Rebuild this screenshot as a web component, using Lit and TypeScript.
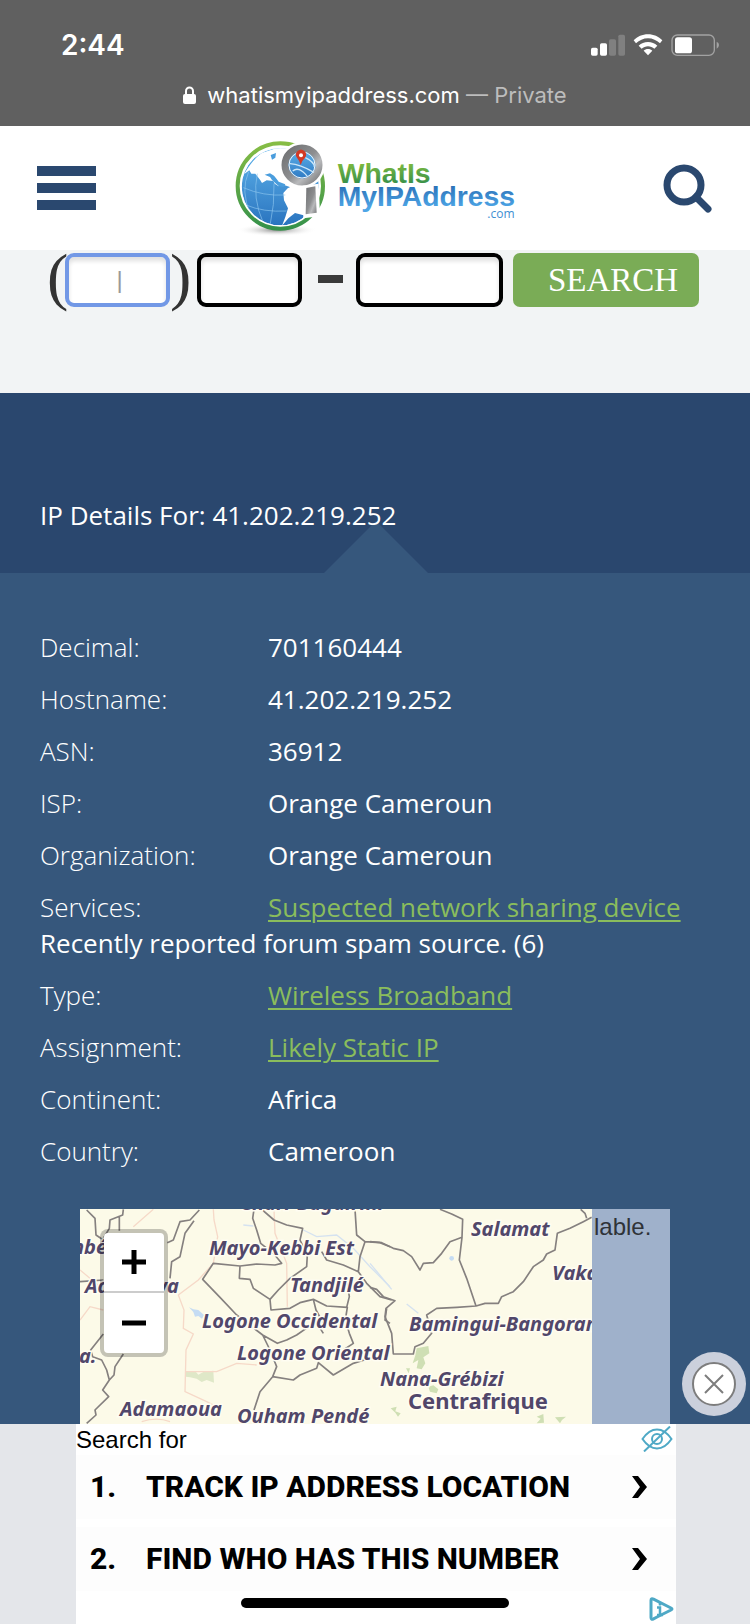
import { LitElement, html, css, nothing } from "lit";
import { customElement } from "lit/decorators.js";

interface Detail {
  label: string;
  value: string;
  link?: boolean;
  note?: string;
}

const DETAILS: Detail[] = [
  { label: "Decimal:", value: "701160444" },
  { label: "Hostname:", value: "41.202.219.252" },
  { label: "ASN:", value: "36912" },
  { label: "ISP:", value: "Orange Cameroun" },
  { label: "Organization:", value: "Orange Cameroun" },
  {
    label: "Services:",
    value: "Suspected network sharing device",
    link: true,
    note: "Recently reported forum spam source. (6)",
  },
  { label: "Type:", value: "Wireless Broadband", link: true },
  { label: "Assignment:", value: "Likely Static IP", link: true },
  { label: "Continent:", value: "Africa" },
  { label: "Country:", value: "Cameroon" },
];

const ADS = ["TRACK IP ADDRESS LOCATION", "FIND WHO HAS THIS NUMBER"];

@customElement("browser-bar")
export class BrowserBar extends LitElement {
  static styles = css`
    :host {
      display: flex;
      flex-direction: column;
      height: 126px;
      background: #606060;
      color: #fff;
      font-family: Inter, sans-serif;
    }
    .status {
      display: flex;
      justify-content: space-between;
      align-items: center;
      padding: 27px 31px 0 61px;
      height: 36px;
    }
    .time {
      font-size: 28px;
      font-weight: 600;
      line-height: 36px;
    }
    .signals {
      display: block;
      width: 128px;
      height: 22px;
    }
    .address {
      display: flex;
      justify-content: center;
      align-items: center;
      gap: 11px;
      margin-top: 16px;
      font-size: 22px;
      line-height: 32px;
    }
    .private {
      color: #bdbdbd;
    }
    .lock {
      display: block;
      width: 13px;
      height: 18px;
    }
  `;

  render() {
    return html`
      <div class="status">
        <span class="time">2:44</span>
        <svg class="signals" viewBox="93 41 384 66" aria-hidden="true">
          <g fill="#fff">
            <rect x="93" y="82" width="20" height="24" rx="5" />
            <rect x="120" y="69" width="21" height="37" rx="5" />
          </g>
          <g fill="#808080">
            <rect x="147" y="57" width="21" height="49" rx="5" />
            <rect x="175" y="43" width="20" height="63" rx="5" />
          </g>
          <path d="M264 42c17 0 32 7 43 18l-7 9c-10-9-22-15-36-15s-26 6-36 15l-7-9c11-11 26-18 43-18z" fill="#fff" />
          <path d="M264 65c11 0 20 4 28 11l-9 9c-5-4-12-7-19-7s-14 3-19 7l-9-9c8-7 17-11 28-11z" fill="#fff" />
          <path d="M264 86c5 0 10 2 13 5l-13 14-13-14c3-3 8-5 13-5z" fill="#fff" />
          <rect x="336" y="44" width="127" height="61" rx="16" fill="none" stroke="#a2a2a2" stroke-width="4" />
          <rect x="345" y="51" width="51" height="48" rx="8" fill="#fff" />
          <path d="M470 64q7 3 7 10t-7 11z" fill="#a2a2a2" />
        </svg>
      </div>
      <div class="address">
        <svg class="lock" viewBox="0 0 13 18" aria-hidden="true">
          <rect x="0" y="8" width="13" height="10" rx="2" fill="#fff" />
          <path d="M3 9V5a3.5 3.5 0 0 1 7 0v4" fill="none" stroke="#fff" stroke-width="2" />
        </svg>
        <span>whatismyipaddress.com <span class="private">— Private</span></span>
      </div>
    `;
  }
}

@customElement("site-header")
export class SiteHeader extends LitElement {
  static styles = css`
    :host {
      display: grid;
      grid-template-columns: 1fr auto 1fr;
      align-items: center;
      height: 124px;
      padding: 0 37px;
      background: #fff;
    }
    .icon-button {
      display: block;
      justify-self: start;
      padding: 0;
      border: 0;
      background: none;
      color: #2a486f;
    }
    .end {
      justify-self: end;
    }
    .menu {
      display: block;
      width: 59px;
      height: 44px;
    }
    .find {
      display: block;
      width: 50px;
      height: 50px;
    }
    .logo {
      display: block;
      width: 310px;
      height: 115px;
    }
    .word {
      font-family: "Liberation Sans", Arial, sans-serif;
      font-weight: 700;
      font-size: 85px;
    }
    .com {
      font-family: "Open Sans", sans-serif;
      font-size: 36px;
    }
  `;

  render() {
    return html`
      <button class="icon-button" aria-label="Menu">
        <svg class="menu" viewBox="0 0 59 44">
          <path d="M0 0h59v10H0zM0 17h59v10H0zM0 34h59v10H0z" fill="currentColor" />
        </svg>
      </button>
      <a href="#" aria-label="WhatIsMyIPAddress.com">
        <svg class="logo" viewBox="0 0 930 345">
          <defs>
            <linearGradient id="ring" x1="0" y1="0" x2="0" y2="1">
              <stop offset="0" stop-color="#86bd45" />
              <stop offset="1" stop-color="#35914a" />
            </linearGradient>
            <linearGradient id="ocean" x1="0" y1="0" x2="0" y2="1">
              <stop offset="0" stop-color="#5fb4ec" />
              <stop offset="1" stop-color="#2a74bf" />
            </linearGradient>
            <linearGradient id="steel" x1="0" y1="0" x2="1" y2="1">
              <stop offset="0" stop-color="#6f7072" />
              <stop offset="0.5" stop-color="#8d8e90" />
              <stop offset="0.7" stop-color="#b9babc" />
              <stop offset="1" stop-color="#77787a" />
            </linearGradient>
            <linearGradient id="greenword" gradientUnits="userSpaceOnUse" x1="0" y1="90" x2="0" y2="158">
              <stop offset="0" stop-color="#84be3f" />
              <stop offset="1" stop-color="#38904a" />
            </linearGradient>
            <linearGradient id="blueword" gradientUnits="userSpaceOnUse" x1="0" y1="165" x2="0" y2="245">
              <stop offset="0" stop-color="#2c72b8" />
              <stop offset="0.8" stop-color="#4da5e6" />
            </linearGradient>
            <radialGradient id="shade">
              <stop offset="0" stop-color="#8a8a8a" />
              <stop offset="1" stop-color="#fff" stop-opacity="0" />
            </radialGradient>
            <clipPath id="globe"><circle cx="181" cy="167" r="116" /></clipPath>
          </defs>
          <ellipse cx="170" cy="297" rx="120" ry="19" fill="url(#shade)" />
          <circle cx="181" cy="165" r="128" fill="#fff" stroke="url(#ring)" stroke-width="12" />
          <g clip-path="url(#globe)">
            <circle cx="181" cy="167" r="116" fill="url(#ocean)" />
            <path
              d="M72 130Q95 88 125 66L168 52L215 50L232 150L220 172L182 158L176 166L164 158L160 150L140 148L126 156L120 146L106 128L94 128L88 118Z"
              fill="#fff"
            />
            <path
              d="M134 131L150 127L162 134L170 144L176 152L184 155L196 160L190 168L176 165L168 158L156 147L150 138ZM152 72L168 66L166 80L156 86Z"
              fill="#4a9ddd"
            />
            <path
              d="M203 172L222 163L256 168L300 174L300 220L262 256L225 246L205 262L186 284L196 258L204 232L192 208L190 186Z"
              fill="#fff"
            />
            <path
              d="M70 170Q130 196 196 192M78 222Q130 244 200 240M112 128Q96 200 130 276M162 158Q164 220 150 284M86 122Q60 180 92 250"
              fill="none"
              stroke="#8cc6ee"
              stroke-width="2"
            />
          </g>
          <circle cx="246" cy="102" r="69" fill="#fff" />
          <circle cx="246" cy="102" r="51" fill="url(#ocean)" stroke="url(#steel)" stroke-width="21" />
          <circle cx="246" cy="102" r="39" fill="none" stroke="#f2f8fc" stroke-width="3" />
          <path d="M210 98Q240 100 282 124M256 80Q282 92 283 108M218 120Q236 104 262 136" fill="none" stroke="#cbe6f8" stroke-width="4" />
          <path d="M242 102Q238 88 231 80A15 15 0 1 1 255 80Q246 88 242 102Z" fill="#d23a25" />
          <circle cx="243" cy="73" r="6" fill="#fff" />
          <path d="M248 164L296 158L300 256L250 262Z" fill="#fff" />
          <path d="M259 171L286 166L290 245L257 250Z" fill="url(#steel)" />
          <text class="word" x="353" y="155" fill="url(#greenword)">WhatIs</text>
          <text class="word" x="353" y="225" fill="url(#blueword)">MyIPAddress</text>
          <text class="com" x="802" y="260" fill="#3f8fd2">.com</text>
        </svg>
      </a>
      <button class="icon-button end" aria-label="Search">
        <svg class="find" viewBox="0 0 50 50">
          <circle cx="21" cy="22" r="17" fill="none" stroke="currentColor" stroke-width="7" />
          <path d="M33 34L45 46" stroke="currentColor" stroke-width="7" stroke-linecap="round" />
        </svg>
      </button>
    `;
  }
}

@customElement("phone-search")
export class PhoneSearch extends LitElement {
  static styles = css`
    :host {
      display: block;
      height: 143px;
      background: #f2f4f5;
    }
    .form {
      display: flex;
      align-items: flex-start;
      margin: 0 42px 0 47px;
      padding-top: 3px;
      height: 54px;
    }
    .paren {
      width: 18px;
      font-family: "Liberation Serif", serif;
      font-size: 64px;
      line-height: 48px;
      color: #333;
    }
    .close {
      margin-right: 9px;
    }
    .digits {
      box-sizing: border-box;
      width: 105px;
      height: 54px;
      padding: 0;
      border: 4px solid #000;
      border-radius: 9px;
      background: #fff;
      box-shadow: inset 0 4px 4px #e0e0e0;
      font-family: "Liberation Sans", sans-serif;
      font-size: 24px;
      text-align: center;
      outline: 0;
    }
    .digits::placeholder {
      color: #999;
      opacity: 1;
    }
    .active {
      padding-left: 4px;
      border-color: #7298e6;
    }
    .line {
      width: 147px;
    }
    .dash {
      width: 25px;
      height: 8px;
      margin: 22px 13px 0 16px;
      background: #3a3a3a;
    }
    .submit {
      flex: 1;
      height: 54px;
      margin: 0 9px 0 10px;
      padding: 0 0 0 14px;
      border: 0;
      border-radius: 7px;
      background: #7aac56;
      color: #fff;
      font-family: "Liberation Serif", serif;
      font-size: 33px;
    }
  `;

  render() {
    return html`
      <form class="form" @submit=${(e: Event) => e.preventDefault()}>
        <span class="paren">(</span>
        <input class="digits active" aria-label="Area code" placeholder="|" />
        <span class="paren close">)</span>
        <input class="digits" aria-label="Prefix" />
        <span class="dash"></span>
        <input class="digits line" aria-label="Line number" />
        <button class="submit">SEARCH</button>
      </form>
    `;
  }
}

@customElement("region-map")
export class RegionMap extends LitElement {
  static styles = css`
    :host {
      display: flex;
      position: relative;
      height: 215px;
      overflow: hidden;
      background: #9fb1cb;
    }
    .tiles {
      display: block;
      flex: none;
      width: 512px;
      height: 215px;
      background: #fcfae8;
    }
    .border {
      fill: none;
      stroke: #85807f;
      stroke-width: 5;
      stroke-linejoin: round;
    }
    .road {
      fill: none;
      stroke: #f6d9c8;
      stroke-width: 4;
    }
    .river {
      fill: none;
      stroke: #d5e2f0;
      stroke-width: 4;
    }
    .region {
      font: italic 700 20px "Noto Sans", sans-serif;
      fill: #51476a;
      stroke: #fffdf2;
      stroke-width: 3;
      paint-order: stroke;
    }
    .country {
      font-style: normal;
      font-size: 22px;
    }
    .missing {
      padding: 4px 2px;
      font-family: "Liberation Sans", sans-serif;
      font-size: 24px;
      line-height: 28px;
      color: #2f3338;
    }
    .zoom {
      position: absolute;
      left: 20px;
      top: 20px;
      display: flex;
      flex-direction: column;
      border: 4px solid rgba(0, 0, 0, 0.22);
      border-radius: 8px;
      background: #fff;
      background-clip: padding-box;
    }
    .step {
      display: grid;
      place-items: center;
      box-sizing: border-box;
      width: 60px;
      height: 60px;
      padding: 0;
      border: 0;
      background: none;
    }
    .in {
      border-bottom: 2px solid #ccc;
    }
    .glyph {
      width: 24px;
      height: 24px;
    }
  `;

  render() {
    return html`
      <svg class="tiles" viewBox="0 0 512 215" role="img" aria-label="Map">
        <g transform="translate(-10 -9) scale(0.33333)">
          <path d="M345 515L378 516L385 524L400 516L430 512L432 548L410 540L395 546L380 536L360 532L348 530Z" fill="#dfe8c8" />
          <path d="M357 322L370 328L385 330L402 345L396 356L385 348L375 350L370 336Z" fill="#c5dcf3" />
          <path class="road" d="M430 28L432 60L443 110L430 190L385 240L325 285L342 330L340 385L370 402L348 450L345 575L410 605L450 625M348 515L440 515L500 490L560 495M612 30L615 100L650 190L652 320M250 28L190 80M30 210L90 260M30 360L60 320L100 330M215 665Q260 650 300 665" />
          <path class="river" d="M520 75L550 78M700 90L740 110L800 105L850 145L900 200L960 260" />
          <path class="border" d="M50 30L75 55L78 105L100 120M160 28L158 45L120 60L118 85L100 115M148 50V92M388 30L360 60L330 65L310 120L292 128M372 62L345 100L330 170L305 185L300 235M30 245L100 240M100 402L62 450L68 470L95 480L110 510L118 540L98 570L116 590L75 630L78 645L50 670M160 462L135 500L132 525L118 540" />
          <path class="border" d="M552 28L548 55L560 90L572 130L610 160L635 190L615 195L560 192L510 198L430 190L398 238L450 292L500 345L578 405L622 430L650 420L680 405L738 365L760 400M510 198L508 235L540 238L550 265L600 298L603 330L660 325L690 308L730 298L770 318L832 322L826 360L838 400L850 430L820 450M575 28L612 60L650 75L698 85L690 120L712 165L710 200L660 235L625 270L600 298M730 298L738 330L760 370M755 155L770 180L820 195L865 215L890 250L930 290L965 300M865 215L870 170L885 125L860 105L855 28M885 125L930 128L960 140M832 250L838 290L830 322M578 405L600 450L620 500L608 530L570 575L552 630M608 530L670 540L690 525L740 505L745 488L790 525L850 490L930 465M950 325L945 360L960 370" />
        </g>
        <g transform="translate(290 -9) scale(0.33333)">
          <path d="M140 445L175 438L178 460L160 472L166 490L155 508L140 505L145 480L128 490L136 466ZM175 560L190 556L205 568L200 580L180 575ZM62 625L80 620L76 634L92 640L84 650L76 638ZM500 650L520 642L522 668L500 670L512 656ZM555 652L588 650L576 660L570 670ZM108 505L120 505L116 520Z" fill="#cfdfb4" />
          <circle cx="245" cy="175" r="7" fill="#c5dcf3" />
          <path class="river" d="M0 190L65 268M110 312L145 340" />
          <path class="border" d="M210 28L245 42L278 58L276 112L268 180L290 235L318 318L260 322L200 325L170 345L185 400L160 430L135 440L130 462L70 462L65 400L45 350L48 325L75 302L40 290L20 268L0 262M0 125L35 128L70 145L100 152L125 170L150 210L160 190L190 188L215 160L240 125L276 112M318 318L345 310L385 310L395 290L430 275L460 245L490 200L520 180L530 162L555 150L562 100L600 85L640 65L665 52M632 28L645 40L650 55" />
        </g>
        <g class="region">
          <text x="-14" y="45">mbé</text>
          <text x="5" y="84">Adamawa</text>
          <text x="-1" y="154">a.</text>
          <text x="129" y="46">Mayo-Kebbi Est</text>
          <text x="210" y="83">Tandjilé</text>
          <text x="122" y="119">Logone Occidental</text>
          <text x="157" y="151">Logone Oriental</text>
          <text x="40" y="207">Adamaoua</text>
          <text x="157" y="214">Ouham Pendé</text>
          <text x="391" y="27">Salamat</text>
          <text x="472" y="71">Vakaga</text>
          <text x="329" y="122">Bamingui-Bangoran</text>
          <text x="300" y="177">Nana-Grébizi</text>
          <text x="160" y="1">Chari-Baguirmi</text>
          <text class="country" x="328" y="200">Centrafrique</text>
        </g>
      </svg>
      <span class="missing">lable.</span>
      <div class="zoom">
        <button class="step in" aria-label="Zoom in">
          <svg class="glyph" viewBox="0 0 24 24"><path d="M12 0v24M0 12h24" stroke="#000" stroke-width="5" /></svg>
        </button>
        <button class="step" aria-label="Zoom out">
          <svg class="glyph" viewBox="0 0 24 24"><path d="M0 12h24" stroke="#000" stroke-width="5" /></svg>
        </button>
      </div>
    `;
  }
}

@customElement("ip-details")
export class IpDetails extends LitElement {
  static styles = css`
    :host {
      display: block;
      position: relative;
      background: #36577c;
      color: #fff;
      font-family: "Open Sans", sans-serif;
      font-size: 26px;
      line-height: 36px;
    }
    .banner {
      position: relative;
      padding: 104px 40px 40px;
      background: #2a476e;
    }
    .banner::after {
      content: "";
      position: absolute;
      left: 50%;
      bottom: 0;
      width: 104px;
      height: 52px;
      margin-left: -51px;
      background: #36577c;
      clip-path: polygon(50% 0, 100% 100%, 0 100%);
    }
    .title {
      position: relative;
      z-index: 1;
      margin: 0;
      font-size: 26px;
      font-weight: 400;
    }
    .list {
      display: flex;
      flex-direction: column;
      gap: 16px;
      margin: 0;
      padding: 56px 40px 40px;
    }
    .row {
      display: grid;
      grid-template-columns: 228px 1fr;
    }
    .label {
      font-weight: 300;
    }
    .value {
      margin: 0;
    }
    .note {
      grid-column: 1 / -1;
      margin: 0;
    }
    .link {
      color: #8abd5c;
      text-decoration-thickness: 2px;
      text-underline-offset: 3px;
    }
    .map {
      margin: 0 80px;
    }
    .dismiss {
      position: absolute;
      right: 4px;
      bottom: 8px;
      width: 64px;
      height: 64px;
      padding: 0;
      border: 0;
      background: none;
    }
    .cross {
      display: block;
      width: 64px;
      height: 64px;
    }
  `;

  render() {
    return html`
      <div class="banner"><h1 class="title">IP Details For: 41.202.219.252</h1></div>
      <dl class="list">
        ${DETAILS.map(
          (d) => html`
            <div class="row">
              <dt class="label">${d.label}</dt>
              <dd class="value">${d.link ? html`<a class="link" href="#">${d.value}</a>` : d.value}</dd>
              ${d.note ? html`<dd class="note">${d.note}</dd>` : nothing}
            </div>
          `,
        )}
      </dl>
      <region-map class="map"></region-map>
      <button class="dismiss" aria-label="Close">
        <svg class="cross" viewBox="0 0 64 64">
          <circle cx="32" cy="32" r="32" fill="#cbd0dc" />
          <circle cx="32" cy="32" r="21" fill="#fff" stroke="#7d7d7d" stroke-width="2" />
          <path d="M23 23l18 18M41 23l-18 18" stroke="#7d7d7d" stroke-width="2" />
        </svg>
      </button>
    `;
  }
}

@customElement("link-ads")
export class LinkAds extends LitElement {
  static styles = css`
    :host {
      display: block;
      position: relative;
      padding: 0 74px 0 76px;
      background: #e4e6ea;
      color: #000;
    }
    .card {
      display: flex;
      flex-direction: column;
      height: 200px;
      background: #fff;
    }
    .head {
      display: flex;
      justify-content: space-between;
      padding: 2px 3px 1px 0;
      font-family: "Liberation Sans", sans-serif;
      font-size: 24px;
      line-height: 28px;
    }
    .eye {
      width: 32px;
      height: 26px;
    }
    .item {
      display: grid;
      grid-template-columns: 56px 1fr 15px;
      align-items: center;
      height: 64px;
      margin-bottom: 8px;
      padding: 0 29px 0 14px;
      background: #fdfdfd;
      color: #000;
      font-family: Roboto, sans-serif;
      font-size: 30px;
      font-weight: 800;
      line-height: 32px;
      text-decoration: none;
    }
    .arrow {
      width: 15px;
      height: 22px;
    }
    .home {
      position: absolute;
      left: 50%;
      bottom: 16px;
      width: 268px;
      height: 10px;
      margin-left: -134px;
      border-radius: 5px;
      background: #000;
    }
    .choices {
      position: absolute;
      right: 76px;
      bottom: 3px;
      width: 25px;
      height: 24px;
    }
  `;

  render() {
    return html`
      <div class="card">
        <div class="head">
          <span>Search for</span>
          <svg class="eye" viewBox="0 0 32 26" fill="none" stroke="#4fa9c6" stroke-width="2">
            <path d="M1.500 13Q8 3.500 16 3.500T30.500 13Q24 22.500 16 22.500T1.500 13Z" />
            <circle cx="16" cy="13" r="5" />
            <path d="M3 25.500L29 0.500" />
          </svg>
        </div>
        ${ADS.map(
          (text, i) => html`
            <a class="item" href="#">
              <span>${i + 1}.</span>
              <span>${text}</span>
              <svg class="arrow" viewBox="0 0 15 22"><path d="M0 0h6l9 11-9 11H0l8-11z" /></svg>
            </a>
          `,
        )}
      </div>
      <span class="home"></span>
      <svg class="choices" viewBox="0 0 25 24" fill="none" stroke="#4fa9c6">
        <path d="M9 19.500L22 13Q24 12 22 11L4.500 2.200Q2 1 2 3.500V20.500Q2 23 4.500 21.800L9 19.500" stroke-width="3" stroke-linejoin="round" />
        <path d="M8 10.500H11V18M8 18h6M11 6v2.500" stroke-width="2.500" />
      </svg>
    `;
  }
}

@customElement("app-root")
export class AppRoot extends LitElement {
  static styles = css`
    :host {
      display: block;
      overflow: hidden;
    }
  `;

  render() {
    return html`
      <browser-bar></browser-bar>
      <site-header></site-header>
      <phone-search></phone-search>
      <ip-details></ip-details>
      <link-ads></link-ads>
    `;
  }
}
